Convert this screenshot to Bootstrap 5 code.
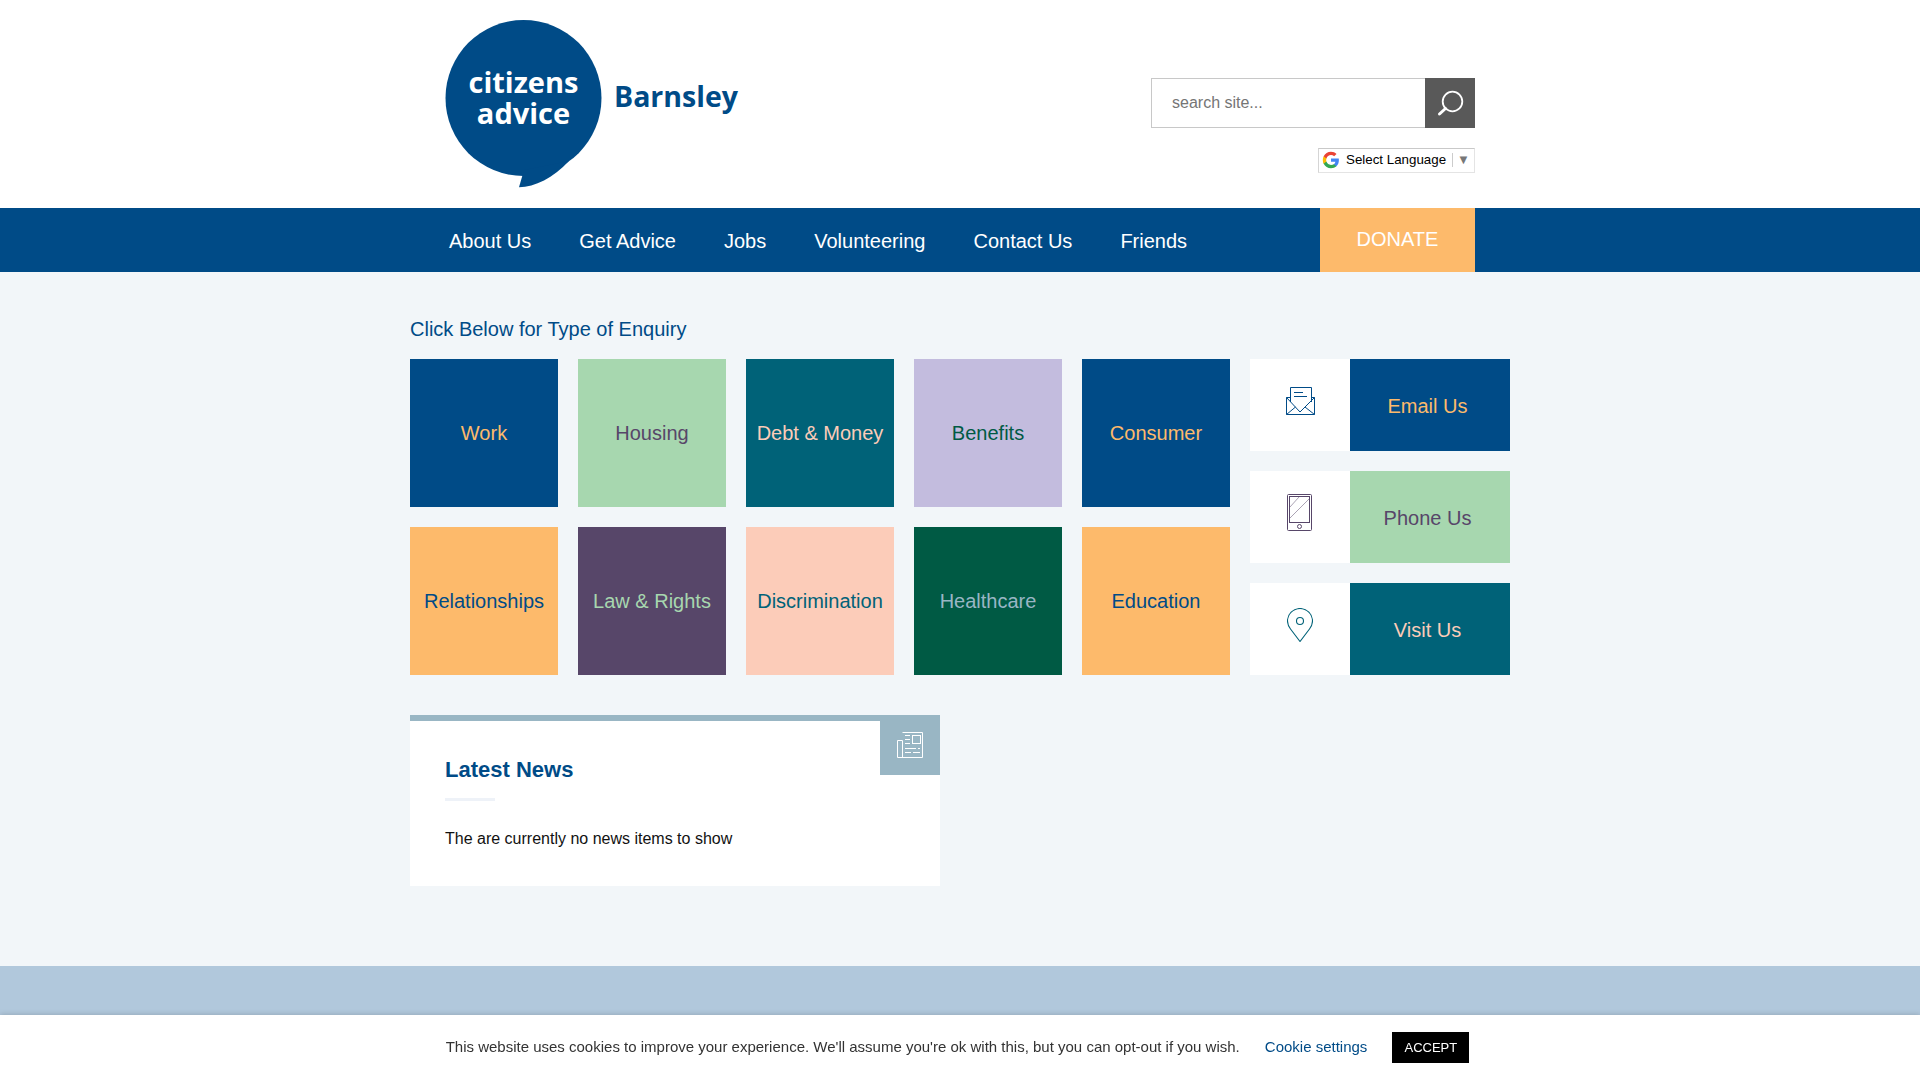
<!DOCTYPE html>
<html lang="en">
<head>
    <meta charset="UTF-8">
    <meta name="viewport" content="width=device-width, initial-scale=1.0">
    <title>Citizens Advice Barnsley</title>
    <link href="https://cdn.jsdelivr.net/npm/bootstrap@5.3.3/dist/css/bootstrap.min.css" rel="stylesheet">
    <style>
        html, body { height: 1080px; overflow: hidden; }
        body { background-color: #f2f6f9; font-family: "Liberation Sans", Arial, sans-serif; color: #000; }
        .page-wrap { width: 1100px; margin: 0 auto; }

        .site-head { height: 208px; background: #fff; }
        .site-head .page-wrap { padding: 20px 35px 0; height: 100%; }
        .logo-svg { display: block; }
        .logo-svg text { font-family: "Open Sans", sans-serif; font-weight: 700; fill: #fff; }
        .logo-svg .place { fill: #004b87; }
        .search-box { width: 324px; height: 50px; margin-top: 58px; border: 1px solid #c8c8c8; border-right: 0; }
        .search-box input { border: 0; outline: 0; flex: 1; min-width: 0; padding: 0 20px; font-size: 16px; font-family: inherit; color: #555; background: #fff; }
        .search-box input::placeholder { color: #757575; opacity: 1; }
        .search-go { width: 50px; margin: -1px 0; background: #595959; border: 0; padding: 0; }
        .lang-box { width: 157px; height: 25px; margin-top: 20px; border: 1px solid #e4e4e4; border-top-color: #c9c9c9; border-left-color: #d5d5d5; padding: 0 0 2px 3px; font-size: 13.33px; color: #000; }
        .lang-g { margin-right: 6px; flex-shrink: 0; }
        .lang-sep { width: 1px; height: 14px; background: #ccc; margin: 0 4px 0 6px; }
        .lang-arrow { font-size: 13px; color: #777; line-height: 1; }

        .site-nav { height: 64px; background: #004b87; }
        .site-nav .page-wrap { padding: 0 35px 0 15px; height: 100%; }
        .site-nav .nav-link { color: #fff; font-size: 20px; padding: 22px 24px 0; line-height: 23px; }
        .donate-btn { width: 155px; height: 64px; background: #fdba6b; color: #fff; font-size: 20px; border-radius: 0; border: 0; padding: 0 0 2px; }
        .donate-btn:hover { background: #fdba6b; color: #fff; }

        .enquiry-title { color: #004b87; font-size: 20px; font-weight: 400; line-height: 23px; margin: 0; padding: 46px 0 18px; }
        .tile-grid { display: grid; grid-template-columns: repeat(5, 148px); grid-auto-rows: 148px; gap: 20px; }
        .tile { display: flex; align-items: center; justify-content: center; font-size: 20px; text-decoration: none; }
        .contact-col { width: 260px; }
        .contact-row { height: 92px; display: flex; }
        .contact-icon { width: 100px; background: #fff; display: flex; align-items: center; justify-content: center; padding-bottom: 8px; }
        .contact-link { flex: 1; display: flex; align-items: center; justify-content: center; font-size: 20px; text-decoration: none; padding: 2px 5px 0 0; }

        .news-box { width: 530px; height: 171px; margin-top: 40px; background: #fff; border-top: 6px solid #99b6c4; position: relative; padding: 36px 35px 0; }
        .news-tag { position: absolute; top: 0; right: 0; width: 60px; height: 54px; background: #99b6c4; display: flex; align-items: center; justify-content: center; padding-bottom: 6px; }
        .news-title { color: #004b87; font-size: 22px; font-weight: 700; line-height: 25px; margin: 0; }
        .news-rule { width: 50px; height: 3px; background: #eef2f8; margin: 16px 0 29px; }
        .news-text { font-size: 16px; line-height: 18px; margin: 0; color: #111; }

        .foot-band { height: 114px; margin-top: 80px; background: #b1c8dc; }
        .cookie-bar { position: fixed; left: 0; right: 0; bottom: 0; height: 65px; background: #fff; box-shadow: 0 -1px 5px rgba(0,0,0,.15); font-size: 15px; color: #333; padding-right: 5px; }
        .cookie-bar a.settings { color: #004b87; text-decoration: none; margin: 0 25px; }
        .accept-btn { width: 77px; height: 31px; background: #000; color: #fff; font-size: 13px; border: 0; border-radius: 0; padding: 0; }
        .accept-btn:hover { background: #000; color: #fff; }

        .c-navy { background: #004b87; color: #fdba6b; }
        .c-green { background: #a7d7af; color: #574669; }
        .c-teal { background: #006278; color: #fcccb9; }
        .c-lav { background: #c3bcde; color: #005a44; }
        .c-orange { background: #fdba6b; color: #004b87; }
        .c-purple { background: #574669; color: #a7d7af; }
        .c-peach { background: #fcccb9; color: #006278; }
        .c-dgreen { background: #005a44; color: #99b6c4; }
    </style>
</head>
<body>
    <header class="site-head">
        <div class="page-wrap d-flex justify-content-between">
            <a href="#">
                <svg class="logo-svg" width="300" height="170" viewBox="0 0 300 170">
                    <circle cx="78.500" cy="78" r="78" fill="#004b87"/>
                    <path fill="#004b87" d="M79 150 74 167.300C90 167 108 158 124 141z"/>
                    <text x="78.500" y="73" text-anchor="middle" font-size="29">citizens</text>
                    <text x="78.500" y="104" text-anchor="middle" font-size="29">advice</text>
                    <text class="place" x="169" y="87" font-size="28.500">Barnsley</text>
                </svg>
            </a>
            <div class="d-flex flex-column align-items-end">
                <form class="search-box d-flex">
                    <input type="text" placeholder="search site...">
                    <button type="button" class="search-go d-flex align-items-center justify-content-center" aria-label="Search">
                        <svg width="28" height="28" viewBox="0 0 28 28" fill="none" stroke="#fff"><circle cx="16.500" cy="12.500" r="9.800" stroke-width="1.800"/><path d="M9.500 19.500 3.500 25" stroke-width="3" stroke-linecap="round"/></svg>
                    </button>
                </form>
                <div class="lang-box d-flex align-items-center">
                    <svg class="lang-g" width="18" height="18" viewBox="0 0 48 48">
                        <path fill="#4285f4" d="M45 24.500c0-1.600-.1-3.100-.4-4.500H24v8.500h11.800c-.5 2.700-2.100 5-4.400 6.600v5.500h7.100c4.100-3.800 6.500-9.400 6.500-16.100z"/>
                        <path fill="#34a853" d="M24 46c5.900 0 10.900-2 14.500-5.300l-7.100-5.500c-2 1.300-4.500 2.100-7.400 2.100-5.700 0-10.500-3.800-12.300-9H4.400v5.700C8 41.100 15.400 46 24 46z"/>
                        <path fill="#fbbc05" d="M11.700 28.300c-.9-2.700-.9-5.900 0-8.600V14H4.400c-3 6-3 14 0 20z"/>
                        <path fill="#ea4335" d="M24 10.700c3.200 0 6.100 1.100 8.400 3.300l6.300-6.300C34.900 4.100 29.900 2 24 2 15.400 2 8 6.900 4.400 14l7.300 5.700c1.800-5.200 6.600-9 12.300-9z"/>
                    </svg>
                    <span>Select Language</span>
                    <span class="lang-sep"></span>
                    <span class="lang-arrow">▼</span>
                </div>
            </div>
        </div>
    </header>

    <nav class="site-nav">
        <div class="page-wrap d-flex justify-content-between">
            <ul class="nav">
                <li class="nav-item"><a class="nav-link" href="#">About Us</a></li>
                <li class="nav-item"><a class="nav-link" href="#">Get Advice</a></li>
                <li class="nav-item"><a class="nav-link" href="#">Jobs</a></li>
                <li class="nav-item"><a class="nav-link" href="#">Volunteering</a></li>
                <li class="nav-item"><a class="nav-link" href="#">Contact Us</a></li>
                <li class="nav-item"><a class="nav-link" href="#">Friends</a></li>
            </ul>
            <a class="btn donate-btn d-flex align-items-center justify-content-center" href="#">DONATE</a>
        </div>
    </nav>

    <main class="page-wrap">
        <h2 class="enquiry-title">Click Below for Type of Enquiry</h2>
        <div class="d-flex justify-content-between">
            <div class="tile-grid">
                <a class="tile c-navy" href="#">Work</a>
                <a class="tile c-green" href="#">Housing</a>
                <a class="tile c-teal" href="#">Debt &amp; Money</a>
                <a class="tile c-lav" href="#">Benefits</a>
                <a class="tile c-navy" href="#">Consumer</a>
                <a class="tile c-orange" href="#">Relationships</a>
                <a class="tile c-purple" href="#">Law &amp; Rights</a>
                <a class="tile c-peach" href="#">Discrimination</a>
                <a class="tile c-dgreen" href="#">Healthcare</a>
                <a class="tile c-orange" href="#">Education</a>
            </div>
            <div class="contact-col d-flex flex-column justify-content-between">
                <div class="contact-row">
                    <div class="contact-icon">
                        <svg width="30" height="28" viewBox="0 0 30 28" fill="none" stroke="#004b87"><path d="M5.500 10.500H1.500V27.500H29.500V10.500H26.500"/><path d="M5.500 15V.5H26.500V15"/><path d="M1.500 10.500 15 25 29.500 10.500M1.500 27.500 10.500 20M29.500 27.500 20 20"/><path d="M9 5.500H18M9 9.500H22"/></svg>
                    </div>
                    <a class="contact-link c-navy" href="#">Email Us</a>
                </div>
                <div class="contact-row">
                    <div class="contact-icon">
                        <svg width="26" height="38" viewBox="0 0 26 38" fill="none" stroke="#574669"><rect x=".5" y=".5" width="24" height="36" rx="1"/><rect x="2.500" y="2.500" width="20" height="26"/><circle cx="12.500" cy="32.500" r="2"/><path stroke-width=".5" d="M3 13 12 3M3 24 22 5"/></svg>
                    </div>
                    <a class="contact-link c-green" href="#">Phone Us</a>
                </div>
                <div class="contact-row">
                    <div class="contact-icon">
                        <svg width="26" height="34" viewBox="0 0 26 34" fill="none" stroke="#006278" stroke-width="1.100"><path d="M13 33.500 3.500 21C1.800 18.800.5 16.500.5 13a12.500 12.500 0 0 1 25 0c0 3.500-1.300 5.800-3 8z"/><circle cx="13" cy="13" r="3.500"/></svg>
                    </div>
                    <a class="contact-link c-teal" href="#">Visit Us</a>
                </div>
            </div>
        </div>

        <section class="news-box">
            <div class="news-tag">
                <svg width="26" height="26" viewBox="0 0 26 26" fill="none" stroke="#fff"><path d="M5.500 .5H25.500V25.500H.5V8.500H5.500V25.500"/><rect x="15.500" y="3.500" width="8" height="8"/><path d="M8 3.500H13M8 7.500H13M8 11.500H13M8 16.500H19M21 16.500H23M8 20.500H14M16 20.500H23"/></svg>
            </div>
            <h3 class="news-title">Latest News</h3>
            <div class="news-rule"></div>
            <p class="news-text">The are currently no news items to show</p>
        </section>
    </main>

    <div class="foot-band"></div>

    <div class="cookie-bar d-flex align-items-center justify-content-center">
        <span>This website uses cookies to improve your experience. We'll assume you're ok with this, but you can opt-out if you wish.</span>
        <a class="settings" href="#">Cookie settings</a>
        <button type="button" class="btn accept-btn">ACCEPT</button>
    </div>

    <script src="https://cdn.jsdelivr.net/npm/bootstrap@5.3.3/dist/js/bootstrap.bundle.min.js"></script>
</body>
</html>
